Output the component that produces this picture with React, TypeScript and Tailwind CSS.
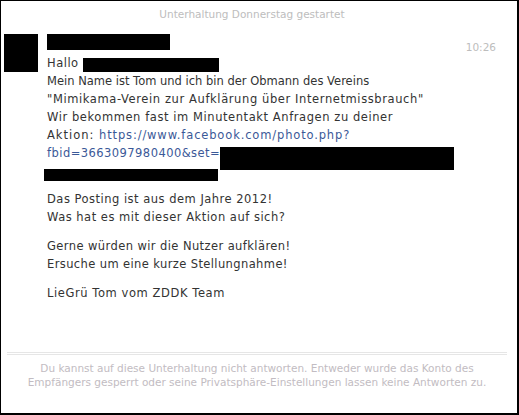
import React from "react";

const Line = ({ children, t = "" }: { children?: React.ReactNode; t?: string }) => (
  <div className={"h-[18px] leading-[18px] whitespace-nowrap flex items-start " + t}>{children}</div>
);

export default function App() {
  return (
    <div
      className="w-[519px] h-[415px] bg-white border-l border-t border-r-2 border-b-2 border-black flex flex-col"
      style={{ fontFamily: '"DejaVu Sans", sans-serif' }}
    >
      <div className="pt-[6px] pr-[14px] text-center text-[10.5px] leading-[14px] text-[#bdbdbd]">
        Unterhaltung Donnerstag gestartet
      </div>

      <div className="mt-[13px] pl-[3px] flex">
        <div className="w-[34px] h-[38px] bg-black shrink-0" />
        <div className="ml-[9px] flex-1 pr-[21px] flex flex-col">
          <div className="flex justify-between items-start">
            <div className="w-[123px] h-[16px] bg-black" />
            <div className="mt-[7px] text-[10.5px] leading-[12px] text-[#bdbdbd]">10:26</div>
          </div>
          <div className="mt-[1px] text-[11.5px] text-[#333333]">
            <Line t="tracking-[0.5px]">
              Hallo&nbsp;<span className="inline-block w-[136px] h-[14px] mt-[4px] bg-black" />
            </Line>
            <Line>Mein Name ist Tom und ich bin der Obmann des Vereins</Line>
            <Line t="tracking-[0.6px]">"Mimikama-Verein zur Aufklärung über Internetmissbrauch"</Line>
            <Line t="tracking-[0.57px]">Wir bekommen fast im Minutentakt Anfragen zu deiner</Line>
            <Line>
              <span className="tracking-[1px]">Aktion:&nbsp;</span>
              <span className="text-[#3b5998] tracking-[0.85px]">https://www.facebook.com/photo.php?</span>
            </Line>
            <Line>
              <span className="text-[#3b5998] tracking-[0.45px]">fbid=3663097980400&amp;set=</span>
              <span className="inline-block w-[234px] h-[23px] mt-[3px] bg-black" />
            </Line>
            <Line>
              <span className="inline-block w-[174px] h-[12px] mt-[7px] -ml-[3px] bg-black" />
            </Line>
            <div className="mt-[10px]">
              <Line t="tracking-[0.49px]">Das Posting ist aus dem Jahre 2012!</Line>
              <Line t="tracking-[0.5px]">Was hat es mit dieser Aktion auf sich?</Line>
            </div>
            <div className="mt-[11px]">
              <Line t="tracking-[0.41px]">Gerne würden wir die Nutzer aufklären!</Line>
              <Line t="tracking-[0.39px]">Ersuche um eine kurze Stellungnahme!</Line>
            </div>
            <div className="mt-[11px]">
              <Line t="tracking-[0.58px]">LieGrü Tom vom ZDDK Team</Line>
            </div>
          </div>
        </div>
      </div>

      <div className="flex-1" />

      <div className="ml-[6px] mr-[10px] pb-[24px]">
        <div className="h-[3px] border-t border-b border-[#e6e6e6]" />
        <div className="mt-[6px] text-center text-[10.5px] leading-[14px] text-[#c2bcc2]">
          Du kannst auf diese Unterhaltung nicht antworten. Entweder wurde das Konto des
          <br />
          Empfängers gesperrt oder seine Privatsphäre-Einstellungen lassen keine Antworten zu.
        </div>
      </div>
    </div>
  );
}
